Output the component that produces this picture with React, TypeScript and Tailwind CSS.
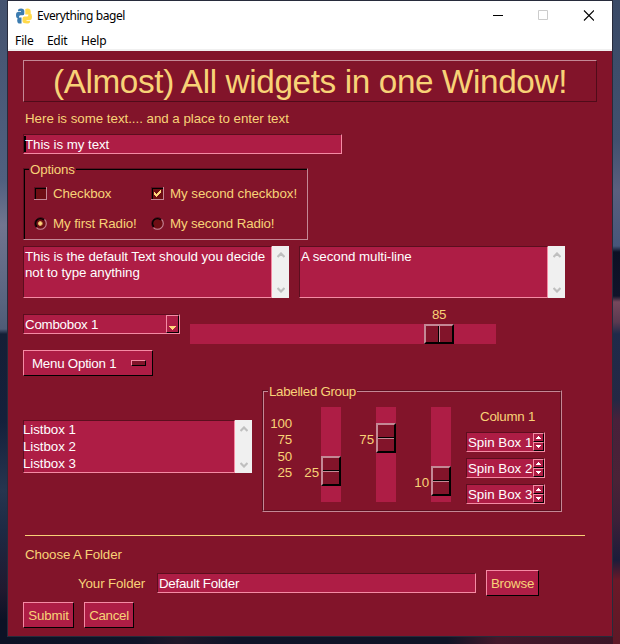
import React from "react";

const sunken = "border border-t-[#5c0e1e] border-l-[#5c0e1e] border-b-[#f58ba4] border-r-[#f58ba4] bg-[#ae1d45] text-white";
const raised = "border border-t-[#f58ba4] border-l-[#f58ba4] border-b-black border-r-black bg-[#ae1d45]";

function Scrollbar() {
  return (
    <div className="flex w-[17px] shrink-0 flex-col items-center justify-between bg-[#f0f0f0] pt-[6px] pb-[5px] pl-px">
      <svg width="8" height="6" viewBox="0 0 8 6"><path d="M.5 5 L4 1.500 L7.500 5" fill="none" stroke="#bfbfbf" strokeWidth="2.2" /></svg>
      <svg width="8" height="6" viewBox="0 0 8 6"><path d="M.5 1 L4 4.500 L7.500 1" fill="none" stroke="#bfbfbf" strokeWidth="2.2" /></svg>
    </div>
  );
}

function Check({ checked = false }: { checked?: boolean }) {
  return (
    <svg className="shrink-0" width="13" height="13" viewBox="0 0 13 13" shapeRendering="crispEdges">
      <path d="M0 0H13V13H0Z" fill="#c48895" />
      <path d="M0 0H12V12H0Z" fill="#5c0e1e" />
      <path d="M1 1H12V12H1Z" fill="#000" />
      <path d="M2 2H12V12H2Z" fill="#6e0e14" />
      {checked && <path d="M3 5h1v1h1v1h1v-1h1v-1h1v-1h1v-1h1v3h-1v1h-1v1h-1v1h-1v1h-1v-1h-1v-1h-1Z" fill="#ffd57c" />}
    </svg>
  );
}

function Radio({ checked = false }: { checked?: boolean }) {
  return (
    <svg className="shrink-0" width="13" height="13" viewBox="0 0 13 13">
      <circle cx="6.5" cy="6.5" r="5" fill="#6e0e14" />
      <path d="M2.4 10.6A5.8 5.8 0 0 1 10.6 2.4" fill="none" stroke="#300710" strokeWidth="1" />
      <path d="M3 9.8A4.8 4.8 0 0 1 9.8 3" fill="none" stroke="#000" strokeWidth="1.3" />
      <path d="M2.4 10.6A5.7 5.7 0 0 0 10.6 2.4" fill="none" stroke="#c48895" strokeWidth="1.1" />
      {checked && <path d="M5 4h2v1h1v2h-1v1h-2v-1h-1v-2h1Z" transform="translate(.25 .5)" fill="#ffd57c" stroke="#ffd57c" strokeWidth=".4" />}
    </svg>
  );
}

function Handle({ vertical = false }: { vertical?: boolean }) {
  return (
    <div className={`flex shrink-0 border-2 border-t-[#c48895] border-l-[#c48895] border-b-black border-r-black bg-[#82142a] ${vertical ? "h-[30px] w-[20px] flex-col" : "h-[20px] w-[30px]"}`}>
      <div className={vertical ? "h-[13px] border-b border-black" : "w-[13px] border-r border-black"} />
      <div className={vertical ? "h-px bg-[#c48895]" : "w-px bg-[#c48895]"} />
    </div>
  );
}

function VSlider({ value, top, label, gap }: { value: number; top: number; label: string; gap: string }) {
  return (
    <div className={`flex ${gap}`}>
      <div className="w-[21px] pr-[2px] text-right" style={{ paddingTop: top + 9 }}><span>{label}</span></div>
      <div className="h-[95px] w-[20px] bg-[#ae1d45]" style={{ paddingTop: top }} aria-valuenow={value}><Handle vertical /></div>
    </div>
  );
}

function Spin({ n }: { n: number }) {
  return (
    <div className={`flex h-[20px] w-[79px] ${sunken}`}>
      <div className="w-[66px] pt-[2px] pl-px tracking-[-0.02px]">Spin Box {n}</div>
      <div className="flex w-[11px] flex-col">
        <div className={`flex h-[9px] items-center justify-center ${raised}`}><svg width="5" height="3" viewBox="0 0 5 3" shapeRendering="crispEdges"><path d="M2 0h1v1h1v1h1v1H0V2h1V1h1Z" fill="#fff" /></svg></div>
        <div className={`flex h-[9px] items-center justify-center ${raised}`}><svg width="5" height="3" viewBox="0 0 5 3" shapeRendering="crispEdges"><path d="M0 0h5v1H4v1H3v1H2V2H1V1H0Z" fill="#fff" /></svg></div>
      </div>
    </div>
  );
}

function Logo() {
  return (
    <svg width="16" height="16" viewBox="0 0 16 16">
      <path d="M2 2.5Q2 .5 5 .5Q8.3 .5 8.3 3V5.8Q8.3 7.3 6.5 7.3H4.5Q3 7.3 3 9V10.5H2Q0 10.3 0 7.3Q0 4 2 4H5V3.3H2Z" fill="#3c7cb0" />
      <path d="M1.2 12Q1.2 9.5 3.5 9.5H5.5V15.5H3Q1.2 15.2 1.2 12Z" fill="#3c7cb0" />
      <path d="M14 13.5Q14 15.5 11 15.5Q6.5 15.5 6.5 13V10.2Q6.5 8.6 8.5 8.6H11Q12.3 8.6 12.3 7V5H14Q16 5.5 16 8.5Q16 12 14 12H10.5V12.7H14Z" fill="#ffd94a" />
      <path d="M9.3 1Q11 .2 13 .8Q14.8 1.3 14.8 4Q14.8 6.5 12 6.5H9.3Z" fill="#ffd94a" />
    </svg>
  );
}

export default function App() {
  return (
    <div className="flex h-[644px] w-[620px] overflow-hidden bg-[#272b3b] font-['Liberation_Sans',Arial,sans-serif] text-[13.33px] leading-[16px] tracking-[-0.06px] whitespace-nowrap text-[#f8d277]">
      <div className="w-[7px] shrink-0 bg-[linear-gradient(180deg,#44536f_0,#50607f_180px,#71758f_225px,#59657f_300px,#4f5b76_329px,#151f36_334px,#14203b_420px,#26354f_490px,#1d2a44_530px,#20192f_590px,#0c1225_620px)]" />
      <div className="w-[606px] shrink-0">
        <div className="mt-px mr-px ml-px h-[635px] w-[604px] bg-[#82142a]">
          <div className="h-[50px] border-b-2 border-[#f0f0f0] bg-white font-['Noto_Sans',sans-serif] text-[12px] text-black">
            <div className="flex h-[29px] items-center pl-[8px]">
              <Logo />
              <span className="ml-[5px] tracking-[-0.42px]">Everything bagel</span>
              <svg className="ml-auto mr-[18px]" width="101" height="11" viewBox="0 0 101 11">
                <path d="M0 5.5H10" stroke="#000" />
                <path d="M45.500 .5H54.500V9.500H45.500Z" fill="none" stroke="#cccccc" />
                <path d="M91 .5L101 10.500M101 .5L91 10.500" stroke="#000" strokeWidth="1.1" />
              </svg>
            </div>
            <div className="flex pt-[3px] pl-[7px]">
              <span className="w-[32px] tracking-[-0.1px]">File</span><span className="w-[34px] tracking-[-0.3px]">Edit</span><span className="tracking-[-0.2px]">Help</span>
            </div>
          </div>

          <div className="pt-[9px] pl-[15px]">
            <div className="h-[42px] w-[574px] border border-t-[#c48895] border-l-[#c48895] border-b-[#500b19] border-r-[#500b19] text-center text-[33.3px] leading-[41px] tracking-[-0.38px]">(Almost) All widgets in one Window!</div>
            <div className="h-[32px] pt-[9px] pl-[2px] tracking-[-0.03px]">Here is some text.... and a place to enter text</div>
            <div className={`flex h-[20px] w-[319px] pt-[2px] ${sunken}`}><span className="-mt-px mb-[1px] border-l-2 border-black pt-px"><span className="-ml-px">This is my text</span></span></div>

            <div className="mt-[14px] h-[72px] w-[285px] border border-t-[#5c0e1e] border-l-[#5c0e1e] border-b-[#c48895] border-r-[#c48895]">
              <div className="h-[70px] border-t border-l border-black pl-[4px]">
                <div className="-mt-[8px] flex"><span className="bg-[#82142a] px-px tracking-[-0.15px]">Options</span></div>
                <div className="mt-[7px] ml-[5px] flex h-[17px] items-center"><Check /><span className="ml-[6px] w-[98px] tracking-[-0.12px]">Checkbox</span><Check checked /><span className="ml-[6px]">My second checkbox!</span></div>
                <div className="mt-[13px] ml-[5px] flex h-[17px] items-center"><Radio checked /><span className="ml-[6px] w-[98px] tracking-[-0.1px]">My first Radio!</span><Radio /><span className="ml-[6px] tracking-[-0.15px]">My second Radio!</span></div>
              </div>
            </div>

            <div className="mt-[6px] flex h-[52px]">
              <div className={`w-[249px] pt-[2px] pl-px tracking-[-0.08px] ${sunken}`}>This is the default Text should you decide<br />not to type anything</div><Scrollbar />
              <div className={`ml-[10px] w-[249px] pt-[2px] pl-px ${sunken}`}>A second multi-line</div><Scrollbar />
            </div>

            <div className="flex h-[52px] pt-[8px]">
              <div className={`mt-[8px] flex h-[20px] w-[157px] justify-between ${sunken}`}>
                <span className="pt-[2px] pl-px tracking-[-0.25px]">Combobox 1</span>
                <div className={`flex h-[18px] w-[13px] justify-center pt-[10px] ${raised}`}><svg width="7" height="4" viewBox="0 0 7 4" shapeRendering="crispEdges"><path d="M0 0h7v1H6v1H5v1H4v1H3V3H2V2H1V1H0Z" fill="#ffd57c" /></svg></div>
              </div>
              <div className="ml-[10px] w-[306px]">
                <div className="h-[18px] pt-px pl-[242px] tracking-[-0.3px]">85</div>
                <div className="h-[20px] bg-[#ae1d45] pl-[234px]"><Handle /></div>
              </div>
            </div>
            <div className={`flex h-[26px] w-[130px] items-center pl-[8px] text-white ${raised}`}><span className="pt-[2px] tracking-[-0.24px]">Menu Option 1</span>
              <div className="ml-auto mr-[6px] h-[6px] w-[15px] border border-t-[#f58ba4] border-l-[#f58ba4] border-b-black border-r-black bg-[#82142a]" />
            </div>

            <div className="mt-[14px] flex h-[122px]">
              <div className="mt-[30px] flex h-[53px]"><div className={`w-[212px] leading-[17px] ${sunken}`}><div className="-ml-px">Listbox 1<br />Listbox 2<br />Listbox 3</div></div><Scrollbar /></div>
              <div className="ml-[10px] h-[122px] w-[300px] border border-t-[#5c0e1e] border-l-[#5c0e1e] border-b-[#c48895] border-r-[#c48895]">
                <div className="h-[120px] border border-t-[#c48895] border-l-[#c48895] border-b-[#5c0e1e] border-r-[#5c0e1e] pl-[4px]">
                  <div className="-mt-[8px] flex h-[16px]"><span className="bg-[#82142a] px-px tracking-[-0.3px]">Labelled Group</span></div>
                  <div className="mt-[7px] flex">
                    <div className="w-[24px] pt-[9px] text-right leading-[16.4px] tracking-[-0.2px]">100<br />75<br />50<br />25</div>
                    <VSlider value={25} top={49} label="25" gap="ml-[8px]" />
                    <VSlider value={75} top={16} label="75" gap="ml-[14px]" />
                    <VSlider value={10} top={59} label="10" gap="ml-[14px]" />
                    <div className="ml-[15px] flex flex-col gap-[6px]"><div className="h-[19px] pt-[2px] pl-[14px] tracking-[-0.25px]">Column 1</div><Spin n={1} /><Spin n={2} /><Spin n={3} /></div>
                  </div>
                </div>
              </div>
            </div>

            <div className="mt-[23px] ml-[2px] h-px w-[560px] bg-[#f8d277]" />
            <div className="mt-[11px] pl-[2px] tracking-[-0.12px]">Choose A Folder</div>
            <div className="mt-[7px] flex h-[26px] items-center">
              <span className="w-[134px] pt-[2px] pl-[55px] tracking-[-0.12px]">Your Folder</span>
              <div className={`h-[20px] w-[319px] pt-[2px] pl-px tracking-[-0.26px] ${sunken}`}>Default Folder</div>
              <div className={`ml-[10px] h-[26px] w-[53px] pt-[5px] text-center tracking-[-0.2px] ${raised}`}>Browse</div>
            </div>
            <div className="mt-[6px] flex gap-[10px]">
              <div className={`h-[26px] w-[51px] pt-[5px] text-center tracking-[-0.2px] ${raised}`}>Submit</div>
              <div className={`h-[26px] w-[50px] pt-[5px] text-center tracking-[-0.3px] ${raised}`}>Cancel</div>
            </div>
          </div>
        </div>
        <div className="mt-px h-[7px] bg-[linear-gradient(90deg,#0c1225_0,#0f1428_130px,#201729_170px,#0f1428_230px,#101426_440px,#43182a_490px,#3a1526_606px)]" />
      </div>
      <div className="w-[7px] shrink-0 bg-[linear-gradient(180deg,#3a4a66_0,#40506e_140px,#5a5f7e_190px,#46567a_246px,#0b1024_252px,#10142a_296px,#76485c_302px,#5a3a50_322px,#1f2a4a_334px,#242844_400px,#48203a_420px,#4a2236_480px,#3c2038_520px,#1b1c3a_560px,#6b1828_580px,#5e1826_644px)]" />
    </div>
  );
}
